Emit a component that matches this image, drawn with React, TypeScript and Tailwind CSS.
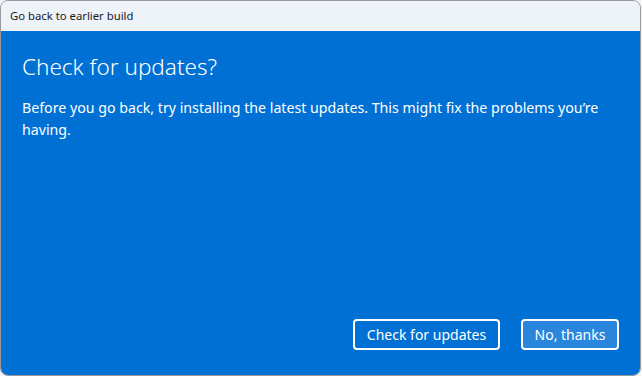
import React from "react";

export default function App() {
  return (
    <div className="w-[642px] h-[376px] bg-[#f3f3f3] flex">
      <div
        className="w-[641px] h-[376px] flex flex-col rounded-[8px] border border-[#9a9a9a] overflow-hidden"
        style={{ fontFamily: '"Segoe UI", "Noto Sans", "Open Sans", sans-serif' }}
      >
        <div className="h-[30px] shrink-0 bg-[#eef2f9] flex items-center pl-[9px] text-[11.3px] text-[#1a1a1a]">
          Go back to earlier build
        </div>
        <div className="flex-1 bg-[#0070d4] text-white flex flex-col px-[21px] pt-[21px] pb-[25px]">
          <h1 className="text-[22.5px] leading-[30px] font-light">Check for updates?</h1>
          <p className="mt-[15px] text-[14.2px] leading-[22px]">
            Before you go back, try installing the latest updates. This might fix the problems you’re having.
          </p>
          <div className="mt-auto flex justify-end gap-[21px] pr-[0px]">
            <button className="h-[31px] w-[147px] rounded-[4px] border-2 border-white bg-[#0070d4] text-[14px] text-white">
              Check for updates
            </button>
            <button className="h-[31px] w-[98px] rounded-[4px] border-2 border-white bg-[#2a86dc] text-[14px] text-white">
              No, thanks
            </button>
          </div>
        </div>
      </div>
    </div>
  );
}
